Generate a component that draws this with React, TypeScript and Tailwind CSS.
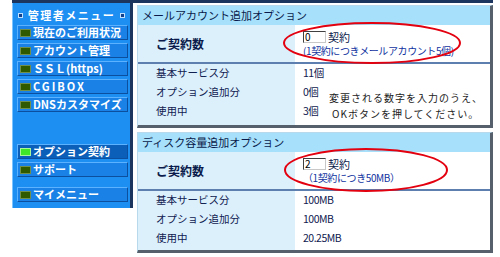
import React from 'react';

const font = { fontFamily: '"Noto Sans CJK JP", "Noto Sans", sans-serif' };

interface MenuItemProps {
  label: string;
  active?: boolean;
  wide?: boolean;
}

const MenuItem: React.FC<MenuItemProps> = ({ label, active, wide }) => (
  <div
    className={`ml-[4px] w-[111px] h-[15px] flex items-center border border-t-[#5cb2ff] border-l-[#5cb2ff] border-r-[#0b4f9e] border-b-[#0b4f9e] ${
      active ? 'bg-[#0c5fb9]' : 'bg-[#1a82e6]'
    }`}
  >
    <span
      className={`ml-[2px] w-[11px] h-[8px] border shrink-0 ${
        active ? 'bg-[#3fe628] border-[#a9f59a]' : 'bg-[#2f5a00] border-[#6f8f4a]'
      }`}
    />
    <span className={`ml-[2px] text-white font-bold text-[11px] leading-none whitespace-nowrap ${wide ? 'tracking-[2px]' : ''}`}>
      {label}
    </span>
  </div>
);

const Sidebar = () => (
  <div className="w-[121px] h-[205px] bg-[#1d8ef2] border-l border-l-[#7cc4ff] border-r-[3px] border-r-[#1c355f] pt-[5px] flex flex-col shrink-0">
    <div className="h-[14px] flex items-center justify-between px-[5px]">
      <span className="w-[5px] h-[5px] bg-[#10408a] border border-[#bfe0ff]" />
      <span className="text-white font-bold text-[11px] leading-none tracking-[1.5px]">管理者メニュー</span>
      <span className="w-[5px] h-[5px] bg-[#10408a] border border-[#bfe0ff]" />
    </div>
    <div className="mt-[3px] flex flex-col gap-[3px]">
      <MenuItem label="現在のご利用状況" />
      <MenuItem label="アカウント管理" />
      <MenuItem label="ＳＳＬ(https)" />
      <MenuItem label="CGIBOX" wide />
      <MenuItem label="DNSカスタマイズ" />
    </div>
    <div className="mt-[32px] flex flex-col gap-[3px]">
      <MenuItem label="オプション契約" active />
      <MenuItem label="サポート" />
    </div>
    <div className="mt-[10px]">
      <MenuItem label="マイメニュー" />
    </div>
  </div>
);

interface Row {
  label: string;
  value: string;
}

interface PanelProps {
  title: string;
  current: string;
  note: string;
  rows: Row[];
  ellipse: { cx: number; cy: number; rx: number; ry: number };
  instruction?: boolean;
  height: string;
}

const Panel: React.FC<PanelProps> = ({ title, current, note, rows, ellipse, instruction, height }) => (
  <div className={`relative w-[356px] ${height} border border-[#b8d8ec] border-r-[3px] border-r-[#56606c] border-b-[3px] border-b-[#56606c] flex flex-col bg-[#dcf0fc]`}>
    <div className="h-[19px] bg-[#a6e0fa] flex items-center pl-[4px] text-[11px] text-[#0a1a4a] leading-none">
      {title}
    </div>
    <div className="flex h-[37px]">
      <div className="w-[157px] flex items-center pl-[18px] font-bold text-[12px] text-[#0a1a4a]">ご契約数</div>
      <div className="flex-1 bg-white pl-[8px] pt-[6px] flex flex-col">
        <div className="flex items-center gap-[2px]">
          <div className="w-[23px] h-[12px] border border-t-[#404040] border-l-[#404040] border-r-[#c8c8c8] border-b-[#c8c8c8] bg-white text-[10px] leading-[10px] pl-[1px] text-black">
            {current}
          </div>
          <span className="text-[11px] leading-none text-[#0a1a4a]">契約</span>
        </div>
        <div className="mt-[3px] text-[10px] leading-none text-[#1033a0] tracking-[-0.4px] whitespace-nowrap">{note}</div>
      </div>
    </div>
    <div className="h-[2px] bg-[#5d7fb0]" />
    <div className="flex flex-1">
      <div className="w-[157px] flex flex-col">
        {rows.map((r) => (
          <div key={r.label} className="h-[19px] flex items-center pl-[18px] text-[10.5px] text-[#102050] leading-none">
            {r.label}
          </div>
        ))}
      </div>
      <div className="flex-1 bg-white flex">
        <div className="w-[34px] flex flex-col shrink-0">
          {rows.map((r) => (
            <div key={r.label} className="h-[19px] flex items-center pl-[8px] text-[10.5px] text-[#102050] leading-none whitespace-nowrap tracking-[-0.5px]">
              {r.value}
            </div>
          ))}
        </div>
        {instruction && (
          <div className="pt-[26px] text-[10px] leading-[16px] text-[#222] tracking-[1px] whitespace-nowrap">
            <div>変更される数字を入力のうえ、</div>
            <div className="pl-[3px]">OKボタンを押してください。</div>
          </div>
        )}
      </div>
    </div>
    <svg className="absolute left-0 top-0 pointer-events-none" width="356" height="100">
      <ellipse cx={ellipse.cx} cy={ellipse.cy} rx={ellipse.rx} ry={ellipse.ry} fill="none" stroke="#e3000f" strokeWidth="2" />
    </svg>
  </div>
);

export default function App() {
  return (
    <div className="w-[500px] h-[257px] bg-white overflow-hidden" style={font}>
      <div className="ml-[12px] w-[481px] h-[3px] bg-[#1c355f]" />
      <div className="flex items-start ml-[12px]">
        <Sidebar />
        <div className="ml-[4px] mt-[2px] flex flex-col gap-[4px]">
          <Panel
            title="メールアカウント追加オプション"
            current="0"
            note="(1契約につきメールアカウント5個)"
            rows={[
              { label: '基本サービス分', value: '11個' },
              { label: 'オプション追加分', value: '0個' },
              { label: '使用中', value: '3個' },
            ]}
            ellipse={{ cx: 234, cy: 37, rx: 88, ry: 20 }}
            instruction
            height="h-[123px]"
          />
          <Panel
            title="ディスク容量追加オプション"
            current="2"
            note="（1契約につき50MB）"
            rows={[
              { label: '基本サービス分', value: '100MB' },
              { label: 'オプション追加分', value: '100MB' },
              { label: '使用中', value: '20.25MB' },
            ]}
            ellipse={{ cx: 228, cy: 37, rx: 81, ry: 21 }}
            height="h-[121px]"
          />
        </div>
      </div>
    </div>
  );
}
